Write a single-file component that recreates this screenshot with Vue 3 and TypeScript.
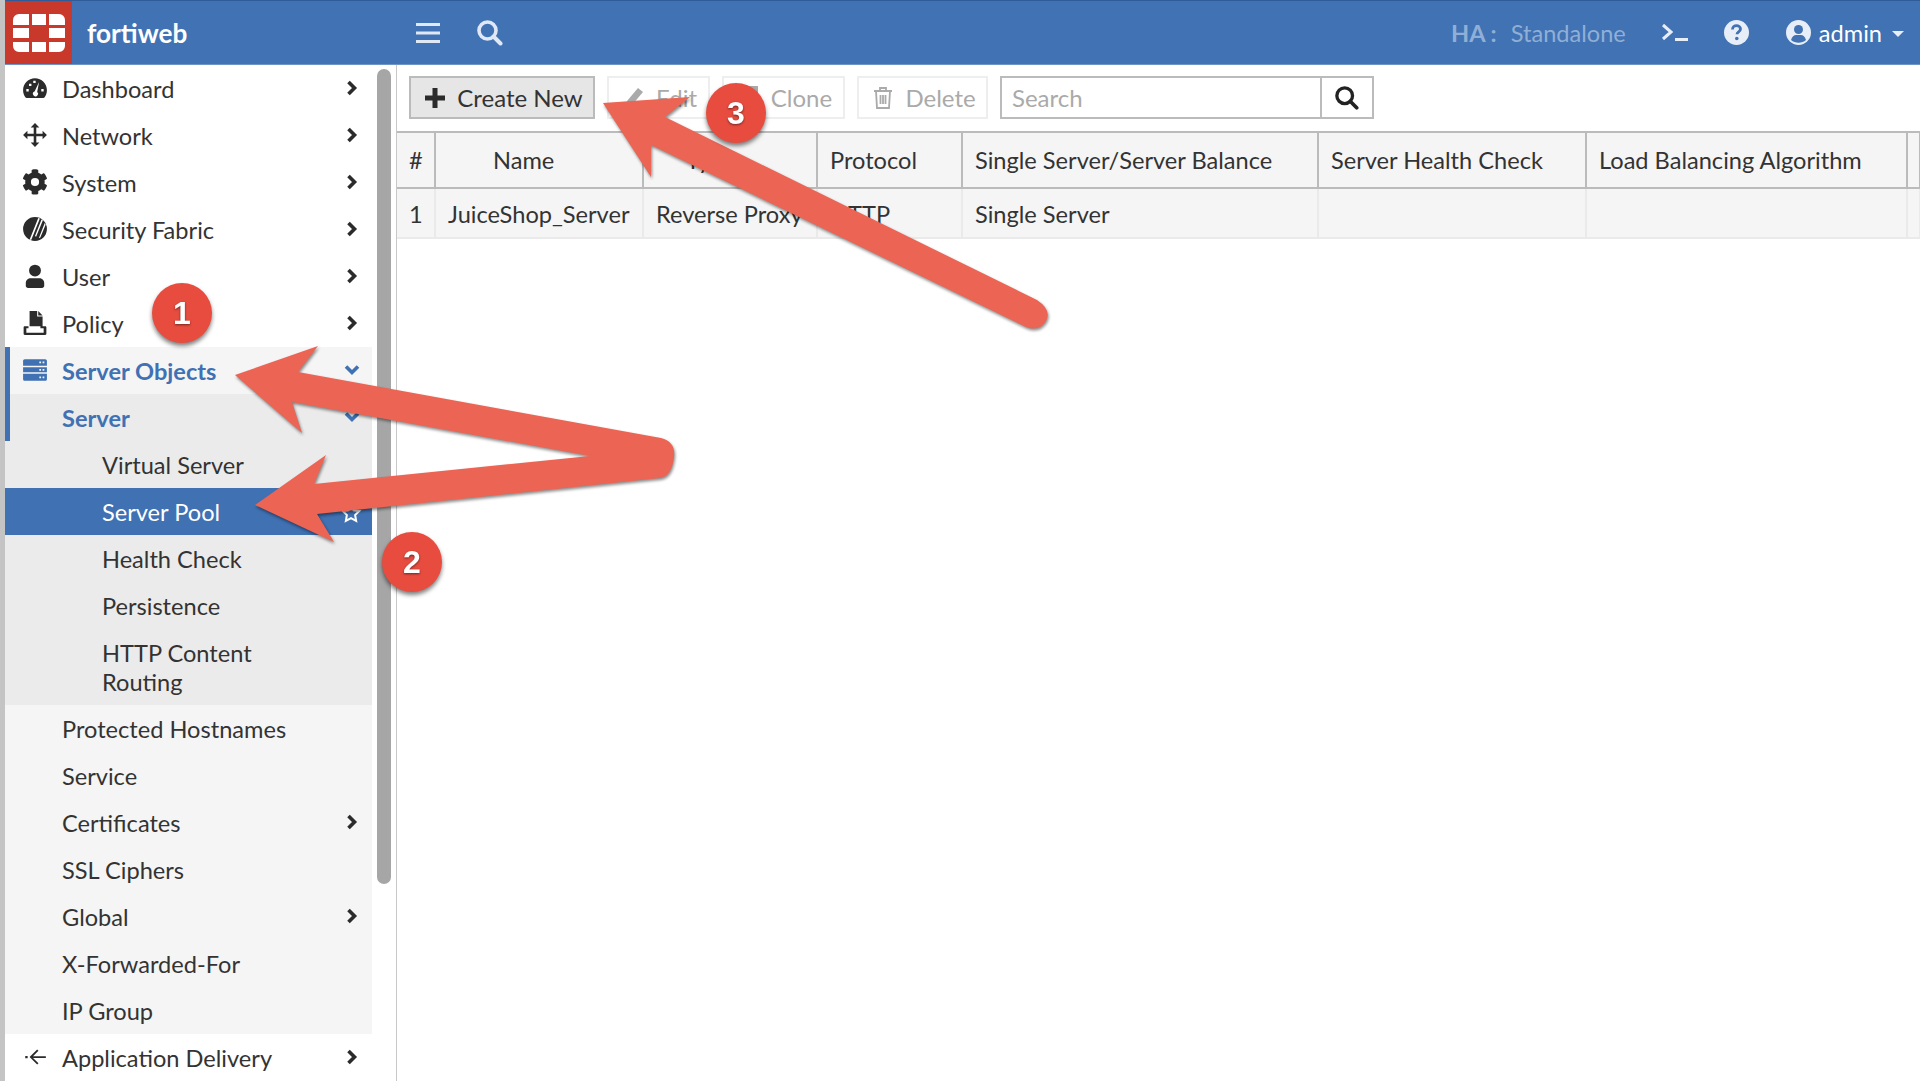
<template>
  <div class="app">
    <!-- top bar -->
    <header class="topbar">
      <div class="logo">
        <svg width="52" height="38" viewBox="0 0 52 38">
          <path fill="#fff" d="M6 0h10v11H0V6a6 6 0 0 1 6-6zM19 0h14v11H19zM36 0h10a6 6 0 0 1 6 6v5H36zM0 14h16v10H0zM36 14h16v10H36zM0 28h16v10H6a6 6 0 0 1-6-6zM19 28h14v10H19zM36 28h16v4a6 6 0 0 1-6 6H36z" />
        </svg>
      </div>
      <div class="brand">fortiweb</div>
      <svg class="hamburger" width="24" height="22" viewBox="0 0 24 22">
        <path fill="#dfe8f4" d="M0 1h24v3H0zM0 9.500h24v3H0zM0 18h24v3H0z" />
      </svg>
      <svg class="top-search" width="26" height="26" viewBox="0 0 26 26">
        <circle cx="10.500" cy="10.500" r="8.500" fill="none" stroke="#dfe8f4" stroke-width="3.600" />
        <path d="M16.500 16.500l7 7" stroke="#dfe8f4" stroke-width="4" stroke-linecap="round" />
      </svg>
      <div class="top-right">
        <span class="ha"><b>HA :</b><span class="ha-val">Standalone</span></span>
        <svg class="tr-ico" width="27" height="20" viewBox="0 0 27 20">
          <path d="M2 2l8 7-8 7" fill="none" stroke="#e8eef7" stroke-width="3" />
          <path d="M14 16.500h13" stroke="#e8eef7" stroke-width="3" />
        </svg>
        <svg class="tr-ico help" width="25" height="25" viewBox="0 0 25 25">
          <circle cx="12.500" cy="12.500" r="12.500" fill="#e8eef7" />
          <path d="M8.500 9.500c0-2.500 2-3.800 4-3.800s4 1.300 4 3.400c0 2.900-3.500 2.800-3.500 5.200" fill="none" stroke="#4072b4" stroke-width="2.800" />
          <circle cx="12.800" cy="18.500" r="1.800" fill="#4072b4" />
        </svg>
        <svg class="user-ico" width="25" height="25" viewBox="0 0 25 25">
          <circle cx="12.500" cy="12.500" r="12.500" fill="#e8eef7" />
          <circle cx="12.500" cy="9.500" r="4.500" fill="#4072b4" />
          <path d="M5 20c1-3.500 3-5 5-5h5c2 0 4 1.500 5 5-4 3.500-11 3.500-15 0z" fill="#4072b4" />
        </svg>
        <span class="admin">admin</span>
        <span class="caret"></span>
      </div>
    </header>

    <div class="body">
      <!-- side menu -->
      <aside class="sidebar">
        <nav class="nav">
          <div
            v-for="item in menu"
            :key="item.label"
            class="row"
            :class="[item.level, { active: item.active, current: item.current, bar: item.bar }]"
          >
            <svg v-if="item.icon" class="row-ico" width="26" height="26" viewBox="0 0 24 24">
              <path :d="icons[item.icon]" fill-rule="evenodd" />
            </svg>
            <span class="row-text">{{ item.label }}</span>
            <svg v-if="item.arrow === 'right'" class="chev" width="12" height="16" viewBox="0 0 12 16">
              <path d="M2.500 2l6 6-6 6" fill="none" stroke="#2b2b2b" stroke-width="3.600" />
            </svg>
            <svg v-if="item.arrow === 'down'" class="chev down" width="16" height="12" viewBox="0 0 16 12">
              <path d="M2 2.500l6 6 6-6" fill="none" stroke="#3f71b3" stroke-width="3.600" />
            </svg>
            <svg v-if="item.arrow === 'star'" class="chev star" width="22" height="22" viewBox="0 0 24 24">
              <path d="M12 3l2.800 6 6.200.8-4.500 4.400 1.100 6.300L12 17.500l-5.600 3 1.100-6.300L3 9.800 9.200 9z" fill="none" stroke="#fff" stroke-width="2.200" />
            </svg>
          </div>
        </nav>
        <div class="thumb"></div>
      </aside>

      <!-- content -->
      <main class="content">
        <div class="toolbar">
          <button class="btn primary">
            <svg width="20" height="20" viewBox="0 0 20 20">
              <path d="M7.500 0h5v7.500H20v5h-7.500V20h-5v-7.500H0v-5h7.500z" fill="#2b2b2b" />
            </svg>
            Create New
          </button>
          <button class="btn off edit">
            <svg width="20" height="22" viewBox="0 0 20 22">
              <path d="M14 1l5 4-11 13-6 2 1-6z" fill="#aaa" />
            </svg>
            Edit
          </button>
          <button class="btn off clone">
            <svg width="20" height="26" viewBox="0 0 20 26">
              <path d="M7 1h12v16H7zM2 7h3v13h9v4H2z" fill="#aaa" />
            </svg>
            Clone
          </button>
          <button class="btn off del">
            <svg width="20" height="24" viewBox="0 0 20 24">
              <path d="M1 5h18M7 5V2h6v3M3 5l1 17h12l1-17M7.500 9v9M10 9v9M12.500 9v9" fill="none" stroke="#aaa" stroke-width="1.800" />
            </svg>
            Delete
          </button>
          <div class="search">
            <input class="search-input" placeholder="Search" />
            <div class="search-btn">
              <svg width="24" height="24" viewBox="0 0 26 26">
                <circle cx="10.500" cy="10.500" r="8.500" fill="none" stroke="#222" stroke-width="3.600" />
                <path d="M16.500 16.500l7 7" stroke="#222" stroke-width="4" stroke-linecap="round" />
              </svg>
            </div>
          </div>
        </div>

        <table class="grid">
          <colgroup>
            <col v-for="w in colWidths" :key="w" :style="{ width: w + 'px' }" />
          </colgroup>
          <thead>
            <tr>
              <th>#</th>
              <th class="th-name">Name</th>
              <th class="th-type">Type</th>
              <th>Protocol</th>
              <th>Single Server/Server Balance</th>
              <th>Server Health Check</th>
              <th>Load Balancing Algorithm</th>
              <th></th>
            </tr>
          </thead>
          <tbody>
            <tr>
              <td>1</td>
              <td>JuiceShop_Server</td>
              <td>Reverse Proxy</td>
              <td>HTTP</td>
              <td>Single Server</td>
              <td></td>
              <td></td>
              <td></td>
            </tr>
          </tbody>
        </table>
      </main>
    </div>

    <!-- callouts drawn on top of the screenshot -->
    <svg class="overlay" width="1920" height="1081" viewBox="0 0 1920 1081">
      <g class="arrow">
        <path d="M603 103L690 97L665 117L1037 300Q1052 310 1046 321Q1039 332 1026 327L651 145L651 177Z" />
        <path d="M235 375L318 346L298 372L661 438Q676 442 674 457Q672 476 660 478L317 514L334 542L255 505L326 455L314 484L590 456L292 402L302 433Z" />
      </g>
      <g v-for="b in badges" :key="b.n" class="badge">
        <circle :cx="b.x" :cy="b.y" r="30" />
        <text :x="b.x" :y="b.y + 11">{{ b.n }}</text>
      </g>
    </svg>
  </div>
</template>

<script setup lang="ts">
type MenuItem = {
  label: string
  level: 'l1' | 'l2' | 'l2b' | 'l3'
  icon?: string
  arrow?: 'right' | 'down' | 'star'
  active?: boolean
  current?: boolean
  bar?: boolean
}

const icons: Record<string, string> = {
  dash: 'M12 3C5.900 3 1 7.900 1 14c0 2.400.8 4.700 2.100 6.500.3.400.8.700 1.300.7h15.200c.5 0 1-.3 1.300-.7C22.200 18.700 23 16.400 23 14c0-6.100-4.900-11-11-11zM4 13h2.200v2.200H4zM6.500 8h2.200v2.200H6.500zM10.400 5.200h2.200v2.200h-2.200zM17.800 13H20v2.200h-2.200zM15.800 6.500l-1.800 9.300a2.300 2.300 0 1 1-2.400-.5z',
  move: 'M12 1l4 4h-2.800v5.800H19V8l4 4-4 4v-2.800h-5.800V19H16l-4 4-4-4h2.800v-5.800H5V16l-4-4 4-4v2.800h5.800V5H8z',
  cog: 'M22.800 14.800l-2-1.200c.2-1.100.2-2.200 0-3.300l2-1.100c.2-.2.3-.4.2-.7-.5-1.700-1.400-3.200-2.500-4.400-.2-.2-.5-.3-.7-.1l-2 1.100c-.8-.7-1.800-1.300-2.800-1.600V1.200c0-.3-.2-.5-.5-.6-1.700-.4-3.500-.4-5.100 0-.3.100-.5.300-.5.600v2.300c-1 .4-2 .9-2.800 1.600l-2-1.100c-.2-.2-.5-.1-.7.1C2.300 5.300 1.400 6.800.9 8.500c-.1.300 0 .5.200.7l2 1.100c-.2 1.100-.2 2.200 0 3.300l-2 1.100c-.2.200-.3.400-.2.700.5 1.700 1.400 3.200 2.500 4.400.2.200.5.300.7.100l2-1.100c.8.700 1.800 1.300 2.800 1.600v2.300c0 .3.200.5.500.6 1.700.4 3.500.4 5.100 0 .3-.1.500-.3.500-.6v-2.300c1-.4 2-.9 2.800-1.600l2 1.100c.2.200.5.100.7-.1 1.100-1.200 2-2.700 2.500-4.400.1-.3 0-.5-.2-.7zM12 15.800a3.800 3.800 0 1 1 0-7.600 3.800 3.800 0 0 1 0 7.600z',
  fabric: 'M12 1a11 11 0 1 0 0 22 11 11 0 0 0 0-22zM15 1.800L7 22h1.600L16.500 2.300zM18 3.200L12 18.500l1 .6L19.300 4zM21 6.500l-5.500 14 1.400-.7L21.800 8z',
  user: 'M12 1.500a5.500 5.500 0 1 1 0 11 5.500 5.500 0 0 1 0-11zM3.500 21v-2.500c0-2.800 2.200-4.500 4.500-4.500h8c2.300 0 4.500 1.700 4.500 4.500V21c0 1.200-1 2-2 2h-13c-1 0-2-.8-2-2z',
  policy: 'M7 1h7v5h5v9H7zM15 1l4 4h-4zM2.500 15H6v1.800H4V21h16v-4.200h-3V15h4.500c.5 0 1 .5 1 1v6c0 .5-.5 1-1 1h-19c-.5 0-1-.5-1-1v-6c0-.5.5-1 1-1z',
  server: 'M1 3.500c0-.8.700-1.500 1.500-1.500h19c.8 0 1.500.7 1.500 1.500V8H1zM16 4.200v1.600h1.600V4.200zM19 4.200v1.600h1.600V4.200zM1 9.500h22V14H1zM16 11v1.600h1.600V11zM19 11v1.600h1.600V11zM1 15.500h22v5c0 .8-.7 1.500-1.500 1.500h-19c-.8 0-1.500-.7-1.500-1.500zM16 18v1.600h1.600V18zM19 18v1.600h1.600V18z',
  delivery: 'M3 11h2.200v2.200H3zM14 5l-7 7 7 7 1.200-1.200L10.200 13H22v-1.800H10.200l5-5z',
}

const menu: MenuItem[] = [
  { label: 'Dashboard', level: 'l1', icon: 'dash', arrow: 'right' },
  { label: 'Network', level: 'l1', icon: 'move', arrow: 'right' },
  { label: 'System', level: 'l1', icon: 'cog', arrow: 'right' },
  { label: 'Security Fabric', level: 'l1', icon: 'fabric', arrow: 'right' },
  { label: 'User', level: 'l1', icon: 'user', arrow: 'right' },
  { label: 'Policy', level: 'l1', icon: 'policy', arrow: 'right' },
  { label: 'Server Objects', level: 'l1', icon: 'server', arrow: 'down', active: true, bar: true },
  { label: 'Server', level: 'l2', arrow: 'down', active: true, bar: true },
  { label: 'Virtual Server', level: 'l3' },
  { label: 'Server Pool', level: 'l3', arrow: 'star', current: true },
  { label: 'Health Check', level: 'l3' },
  { label: 'Persistence', level: 'l3' },
  { label: 'HTTP Content Routing', level: 'l3' },
  { label: 'Protected Hostnames', level: 'l2b' },
  { label: 'Service', level: 'l2b' },
  { label: 'Certificates', level: 'l2b', arrow: 'right' },
  { label: 'SSL Ciphers', level: 'l2b' },
  { label: 'Global', level: 'l2b', arrow: 'right' },
  { label: 'X-Forwarded-For', level: 'l2b' },
  { label: 'IP Group', level: 'l2b' },
  { label: 'Application Delivery', level: 'l1', icon: 'delivery', arrow: 'right' },
]

const colWidths = [38, 208, 174, 145, 356, 268, 321, 13]

const badges = [
  { n: 1, x: 182, y: 313 },
  { n: 2, x: 412, y: 562 },
  { n: 3, x: 736, y: 113 },
]
</script>

<style>
html, body { margin: 0; background: #fff; }
</style>

<style scoped>
.app {
  position: relative;
  width: 1920px;
  height: 1081px;
  overflow: hidden;
  box-sizing: border-box;
  border-left: 5px solid #c4c4c4;
  font-family: Lato, "Liberation Sans", sans-serif;
  font-size: 23.6px;
  color: #333;
  background: #fff;
}

.topbar {
  display: flex;
  align-items: center;
  height: 65px;
  box-sizing: border-box;
  background: #4072b4;
  border-top: 1px solid #2f5c99;
  border-bottom: 1px solid #6f95c8;
  color: #fff;
}
.logo {
  display: flex;
  align-items: center;
  justify-content: center;
  width: 67px;
  height: 100%;
  background: #c8392b;
}
.brand {
  width: 344px;
  padding-left: 15px;
  box-sizing: border-box;
  font-size: 26.2px;
  font-weight: 700;
}
.hamburger { margin-right: 37px; }
.top-right { display: flex; align-items: center; margin-left: auto; }
.ha { color: #90afd6; display: flex; margin-right: 35px; }
.ha b { font-weight: 700; }
.ha-val { margin-left: 14px; }
.tr-ico { margin-right: 36px; }
.help { margin-right: 37px; }
.admin { margin-left: 8px; }
.caret {
  margin: 3px 16px 0 10px;
  border-left: 6px solid transparent;
  border-right: 6px solid transparent;
  border-top: 6px solid #e8eef7;
}

.body { display: flex; height: 1016px; }

.sidebar {
  display: flex;
  align-items: flex-start;
  flex: none;
  width: 392px;
  height: 100%;
  box-sizing: border-box;
  border-right: 1px solid #c8c8c8;
}
.nav { width: 367px; flex: none; }
.thumb {
  flex: none;
  width: 14px;
  height: 815px;
  margin: 4px 5px 0;
  background: #a6a6a6;
  border-radius: 7px;
}

.row {
  position: relative;
  display: flex;
  align-items: center;
  box-sizing: border-box;
  min-height: 47px;
  padding-top: 2px;
  padding-right: 50px;
  line-height: 29px;
}
.row.l1 { padding-left: 57px; }
.row.l2 { padding-left: 57px; background: #ebebeb; }
.row.l2b { padding-left: 57px; background: #f5f5f5; }
.row.l3 { padding-left: 97px; background: #ebebeb; padding-top: 10px; padding-bottom: 8px; }
.row.l1.active { background: #f5f5f5; }
.row.active { color: #3f71b3; font-weight: 700; }
.row.bar { box-shadow: inset 5px 0 0 #3f71b3; }
.row.current { background: #3f71b3; color: #fff; }

.row-ico { position: absolute; left: 17px; top: 10px; fill: #2b2b2b; }
.active .row-ico { fill: #3f71b3; }
.chev { position: absolute; left: 341px; top: 15px; }
.chev.down { left: 339px; top: 17px; }
.chev.star { left: 335px; top: 14px; }

.content { flex: 1; min-width: 0; }

.toolbar {
  display: flex;
  align-items: stretch;
  height: 43px;
  padding: 11px 0 12px 12px;
}
.btn {
  display: flex;
  align-items: center;
  justify-content: center;
  gap: 12px;
  box-sizing: border-box;
  height: 43px;
  padding: 0 0 0 4px;
  margin-right: 12px;
  font: inherit;
  font-size: 24px;
  border-radius: 0;
}
.btn.primary { width: 186px; background: #e6e6e6; border: 2px solid #bbb; color: #333; }
.btn.off { background: #fff; border: 2px solid #eee; color: #aaa; }
.btn.edit { width: 103px; }
.btn.clone { width: 123px; }
.btn.del { width: 131px; }
.search { display: flex; }
.search-input {
  width: 320px;
  height: 43px;
  box-sizing: border-box;
  padding: 0 10px;
  border: 2px solid #bbb;
  border-right: 0;
  outline: 0;
  font: inherit;
  font-size: 24px;
  color: #333;
}
.search-input::placeholder { color: #aaa; opacity: 1; }
.search-btn {
  display: flex;
  align-items: center;
  justify-content: center;
  width: 54px;
  height: 43px;
  box-sizing: border-box;
  border: 2px solid #bbb;
}

.grid {
  width: 1523px;
  table-layout: fixed;
  border-collapse: collapse;
}
.grid th, .grid td {
  padding: 0 0 0 12px;
  text-align: left;
  white-space: nowrap;
  overflow: hidden;
  font-weight: 400;
  background: #f5f5f5;
}
.grid th {
  height: 54px;
  border: 2px solid #bbb;
  border-left-width: 1px;
  border-right-width: 2px;
}
.grid th:first-child, .grid td:first-child { border-left: 0; }
.grid td {
  height: 46px;
  padding-top: 2px;
  border-right: 2px solid #eaeaea;
  border-bottom: 2px solid #eaeaea;
}
.grid .th-name { padding-left: 57px; }
.grid .th-type { padding-left: 42px; }

.overlay { position: absolute; left: -5px; top: 0; pointer-events: none; }
.arrow { fill: #ec6453; filter: drop-shadow(1px 2px 1.5px rgba(0, 0, 0, 0.45)); }
.badge circle { fill: #e74c3f; filter: drop-shadow(0 3px 2px rgba(0, 0, 0, 0.5)); }
.badge text {
  fill: #fff;
  font-family: "Liberation Sans", sans-serif;
  font-size: 32px;
  font-weight: 700;
  text-anchor: middle;
  filter: drop-shadow(0 1px 1px rgba(0, 0, 0, 0.5));
}
</style>
